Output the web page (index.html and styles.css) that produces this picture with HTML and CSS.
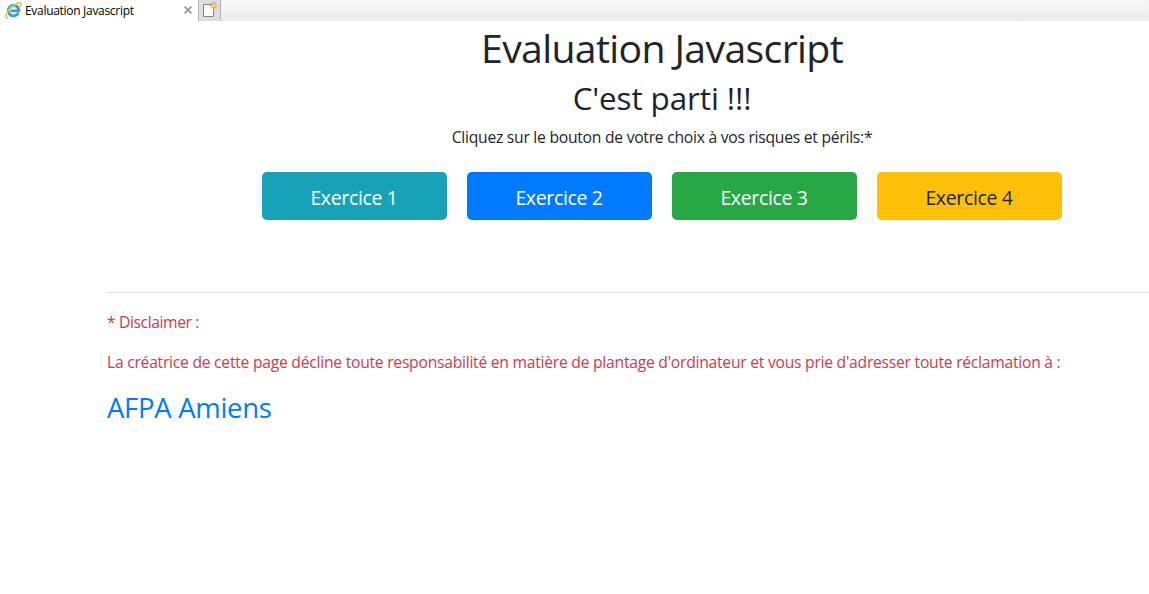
FILE: index.html
```html
<!DOCTYPE html>
<html lang="fr">
<head>
<meta charset="utf-8">
<title>Evaluation Javascript</title>
<link rel="stylesheet" href="styles.css">
</head>
<body>
<header class="tabbar">
  <div class="tab">
    <svg class="tab-logo" viewBox="0 0 17 17" width="17" height="17">
      <path d="M13.400 10.900A5.300 5.300 0 1 1 13.900 8.900H5.500" fill="none" stroke="#2f9fdc" stroke-width="2.800"/>
      <path d="M4 7.400A5 5 0 0 1 8.500 3.500" fill="none" stroke="#75cdf0" stroke-width="1.200"/>
      <path d="M3.500 15.700C-.4 16.500.3 12.400 4.500 7.500 8.900 2.500 14.900-.6 15.800 1.400c.4.9-.1 2.200-1 3.600" fill="none" stroke="#efb93c" stroke-width="1.400"/>
    </svg>
    <span class="tab-title">Evaluation Javascript</span>
    <svg class="tab-close" viewBox="0 0 8 8" width="8" height="8"><path d="M.6.6l6.800 6.800M7.400.6L.6 7.400" stroke="#9b9b9b" stroke-width="1.900"/></svg>
  </div>
  <div class="new-tab">
    <svg viewBox="0 0 21 21" width="21" height="21">
      <path d="M4.500 4.500h10v12h-10z" fill="#fcfcfc" stroke="#858585"/>
      <path d="M14.500 1.500v8M10.500 5.500h8M11.700 2.700l5.600 5.600M17.300 2.700l-5.600 5.600" stroke="#e9a63a" stroke-width="1.200"/>
      <circle cx="14.500" cy="5.500" r="1.800" fill="#ffd45c"/>
    </svg>
  </div>
</header>
<main class="container">
  <section class="intro">
    <h1 class="title">Evaluation Javascript</h1>
    <h2 class="subtitle">C'est parti !!!</h2>
    <p class="lead">Cliquez sur le bouton de votre choix à vos risques et périls:*</p>
    <nav class="buttons">
      <a class="btn btn-info">Exercice 1</a>
      <a class="btn btn-primary">Exercice 2</a>
      <a class="btn btn-success">Exercice 3</a>
      <a class="btn btn-warning">Exercice 4</a>
    </nav>
  </section>
  <hr class="rule">
  <footer class="disclaimer">
    <p class="note note-label">* Disclaimer :</p>
    <p class="note">La créatrice de cette page décline toute responsabilité en matière de plantage d'ordinateur et vous prie d'adresser toute réclamation à :</p>
    <h3 class="contact"><a>AFPA Amiens</a></h3>
  </footer>
</main>
</body>
</html>
```

FILE: styles.css
```css
* { box-sizing: border-box; }
body {
  margin: 0;
  background: #fff;
  color: #212529;
  font-family: "Open Sans", "Noto Sans", sans-serif;
  font-size: 16px;
  line-height: 24px;
}
h1, h2, h3, p { margin: 0; font-weight: 400; white-space: nowrap; }
.tabbar {
  display: flex;
  height: 21px;
  background: linear-gradient(#f8f8f8, #ebebeb);
}
.tab {
  display: flex;
  align-items: center;
  width: 198px;
  padding: 0 6px 0 5px;
  background: #fff;
}
.tab-close { margin-bottom: 1px; }
.tab-title {
  flex: 1;
  margin-left: 3px;
  color: #000;
  font-size: 12px;
  line-height: 20px;
  letter-spacing: -0.3px;
  white-space: nowrap;
}
.new-tab {
  width: 23px;
  height: 21px;
  background: #dedede;
  border: solid #b4b4b4;
  border-width: 0 1px;
}
.new-tab svg { display: block; }
.container { margin-left: 107px; }
.intro { padding-left: 68px; text-align: center; }
.title { padding-top: 3px; font-size: 39.2px; line-height: 48px; letter-spacing: -0.64px; }
.subtitle { margin-top: 7px; font-size: 31.4px; line-height: 38px; letter-spacing: -0.1px; }
.lead { margin-top: 8px; font-size: 15.7px; letter-spacing: -0.265px; }
.buttons {
  display: flex;
  justify-content: center;
  gap: 20px;
  margin: 23px 1px 0 0;
}
.btn {
  width: 185px;
  height: 48px;
  padding-top: 11px;
  border-radius: 4.8px;
  color: #fff;
  font-size: 19.5px;
  line-height: 30px;
  letter-spacing: -0.35px;
}
.btn-info { background: #17a2b8; }
.btn-primary { background: #007bff; }
.btn-success { background: #28a745; }
.btn-warning { background: #ffc107; color: #212529; }
.rule { margin: 72px 0 17px; border: 0; border-top: 1px solid #e2e2e2; }
.note { margin-bottom: 16px; color: #cf3a4b; font-size: 15.7px; letter-spacing: -0.26px; }
.note-label { letter-spacing: -0.4px; }
.contact { padding-top: 1px; color: #007bff; font-size: 27.5px; line-height: 34px; letter-spacing: -0.3px; }
```
